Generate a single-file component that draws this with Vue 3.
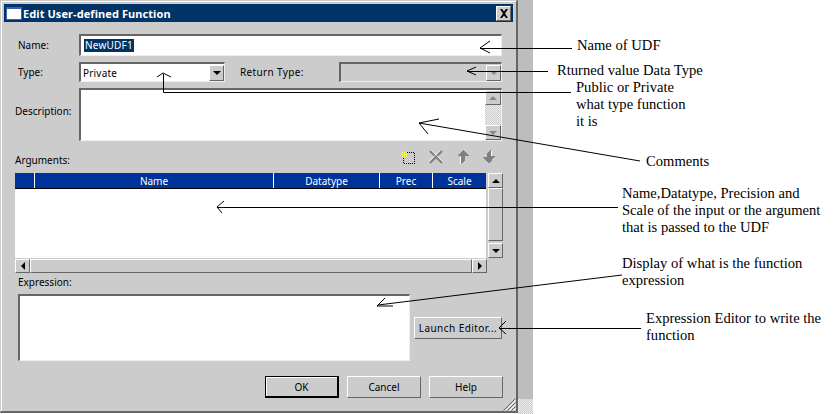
<script setup>
const notes = [
  { text: 'Name of UDF', x: 577, y: 37 },
  { text: 'Rturned value Data Type', x: 557, y: 62 },
  { text: 'Public or Private', x: 576, y: 79 },
  { text: 'what type function', x: 576, y: 96 },
  { text: 'it is', x: 576, y: 113 },
  { text: 'Comments', x: 646, y: 153 },
  { text: 'Name,Datatype, Precision and', x: 622, y: 185 },
  { text: 'Scale of the input or the argument', x: 622, y: 202 },
  { text: 'that is passed to the UDF', x: 622, y: 219 },
  { text: 'Display of what is the function', x: 622, y: 255 },
  { text: 'expression', x: 622, y: 272 },
  { text: 'Expression Editor to write the', x: 646, y: 310 },
  { text: 'function', x: 646, y: 327 }
]
const columns = [
  { label: '', width: 20 },
  { label: 'Name', width: 239 },
  { label: 'Datatype', width: 106 },
  { label: 'Prec', width: 53 },
  { label: 'Scale', width: 53 }
]
const noteStyle = (n) => ({ left: n.x + 'px', top: n.y + 'px' })
const colStyle = (c) => ({ width: c.width + 'px' })
</script>

<template>
  <div class="screen">
    <div class="dialog">
      <header class="titlebar">
        <span class="app-icon"></span>
        <span class="title">Edit User-defined Function</span>
        <button class="bevel close">
          <svg width="10" height="9" viewBox="0 0 10 9"><path d="M1 0h2l2 2.500 2-2.500h2L6 4.500 9 9H7L5 6.500 3 9H1l3-4.500z" fill="#000"/></svg>
        </button>
      </header>

      <div class="form">
        <div class="row row-name">
          <label class="label">Name:</label>
          <div class="sunken grow"><span class="selected">NewUDF1</span></div>
        </div>

        <div class="row row-type">
          <label class="label label-type">Type:</label>
          <div class="sunken combo">
            <span class="combo-text">Private</span>
            <span class="bevel arrow-btn"><i class="tri down"></i></span>
          </div>
          <label class="label-return">Return Type:</label>
          <div class="sunken combo disabled grow">
            <span class="combo-text"></span>
            <span class="bevel arrow-btn"><i class="tri down pale"></i></span>
          </div>
        </div>

        <div class="row row-desc">
          <label class="label label-desc">Description:</label>
          <div class="sunken grow desc">
            <div class="v-scroll slim">
              <span class="bevel sb-btn"><i class="tri up pale"></i></span>
              <span class="checker fill"></span>
              <span class="bevel sb-btn"><i class="tri down pale"></i></span>
            </div>
          </div>
        </div>

        <div class="args-head">
          <span class="args-label">Arguments:</span>
          <div class="tools">
            <svg width="16" height="16" viewBox="0 0 16 16" shape-rendering="crispEdges">
              <path d="M7 3.500h7.500v11h-11V9" fill="none" stroke="#000" stroke-dasharray="1 1"/>
              <path d="M4 2h1v3h3v1H5v3H4V6H1V5h3z" fill="#ff0"/>
              <path d="M2 3h1v1H2zM6 3h1v1H6zM2 7h1v1H2zM6 7h1v1H6z" fill="#fff"/>
            </svg>
            <svg width="16" height="16" viewBox="0 0 16 16">
              <path d="M2 2l12 12M14 2L2 14" stroke="#808080" stroke-width="2" fill="none"/>
              <path d="M3 1l12 12M12 1L1 12" stroke="#fff" stroke-width=".6" fill="none"/>
            </svg>
            <svg width="14" height="16" viewBox="0 0 14 16" shape-rendering="crispEdges">
              <path d="M7 1l6 6H9v4l-3 4H5v-8H1z" fill="#808080"/>
              <path d="M4 8h1v7H4z" fill="#fff"/>
            </svg>
            <svg width="14" height="16" viewBox="0 0 14 16" shape-rendering="crispEdges">
              <path d="M9 1v6h4l-6 8-6-7h4V5l3-4z" fill="#808080"/>
              <path d="M9 2h1v5H9z" fill="#fff"/>
            </svg>
          </div>
        </div>

        <div class="grid-wrap">
          <div class="grid-main">
            <div class="grid">
              <div class="grid-head">
                <span v-for="c in columns" :key="c.label" class="col" :style="colStyle(c)">{{ c.label }}</span>
              </div>
              <div class="grid-body"></div>
            </div>
            <div class="v-scroll wide">
              <span class="bevel sb-btn"><i class="tri up"></i></span>
              <span class="bevel thumb"></span>
              <span class="bevel sb-btn"><i class="tri down"></i></span>
            </div>
          </div>
          <div class="h-scroll">
            <span class="bevel sb-h"><i class="tri left"></i></span>
            <span class="bevel track"></span>
            <span class="bevel sb-h"><i class="tri right"></i></span>
          </div>
        </div>

        <div class="expr-label">Expression:</div>
        <div class="expr-row">
          <div class="sunken expr"></div>
          <button class="bevel btn launch">Launch Editor...</button>
        </div>

        <div class="actions">
          <button class="bevel btn default">OK</button>
          <button class="bevel btn">Cancel</button>
          <button class="bevel btn">Help</button>
        </div>
      </div>

      <svg class="grip" width="13" height="13" viewBox="0 0 13 13">
        <path d="M12.500 0.500L0.500 12.500M12.500 4.500L4.500 12.500M12.500 8.500L8.500 12.500" stroke="#666" fill="none"/>
        <path d="M12.500 2.500L2.500 12.500M12.500 6.500L6.500 12.500M12.500 10.500L10.500 12.500" stroke="#fff" fill="none"/>
      </svg>
    </div>

    <div class="band"><span class="checker corner"></span></div>

    <svg class="overlay" width="835" height="414" viewBox="0 0 835 414" fill="none" stroke="#000">
      <path d="M480 48.500H572M480 48L490 41M480 48L490 53"/>
      <path d="M467 71.500H548M467 71L476 67M467 71L476 75"/>
      <path d="M163.500 74V92.500H571M163 73L157 77M163 73L171 77"/>
      <path d="M419 123L640 161M419 123L439 119M419 123L428 134"/>
      <path d="M217 207.500H618M217 207L224 201M217 207L222 213"/>
      <path d="M378 305L622 275M377 306L385 298M377 306L393 306"/>
      <path d="M499 328.500H641M499 328L506 321M499 328L506 334"/>
    </svg>

    <span v-for="n in notes" :key="n.text" class="note" :style="noteStyle(n)">{{ n.text }}</span>
  </div>
</template>

<style>
html, body { margin: 0; background: #fff; }
</style>

<style scoped>
.screen {
  position: relative;
  display: flex;
  width: 835px;
  height: 414px;
  overflow: hidden;
  background: #fff;
  font-family: "Noto Sans", sans-serif;
  font-size: 10px;
  color: #000;
}
.dialog {
  position: relative;
  flex: none;
  box-sizing: border-box;
  width: 518px;
  height: 413px;
  padding: 3px 3px 0 3px;
  background: #ccc;
  border: 1px solid #ccc;
  border-right: 2px solid #666;
  border-bottom: 2px solid #666;
  box-shadow: inset 1px 1px 0 #fff;
}
.band {
  position: relative;
  flex: none;
  width: 15px;
  background: #bdbdbd;
}
.checker {
  background-color: #ccc;
  background-image: conic-gradient(#eee 25%, transparent 0 50%, #eee 0 75%, transparent 0);
  background-size: 2px 2px;
}
.corner {
  position: absolute;
  left: 0;
  bottom: 0;
  width: 15px;
  height: 15px;
}
.titlebar {
  display: flex;
  align-items: center;
  height: 18px;
  background: #036;
  color: #fff;
}
.app-icon {
  width: 14px;
  height: 10px;
  margin-left: 2px;
  background: #fff;
  border: 1px solid #3b5fb8;
  border-top-width: 2px;
}
.title {
  margin-left: 1px;
  font-weight: 700;
  font-size: 11px;
  letter-spacing: .08px;
  white-space: nowrap;
}
.bevel {
  box-sizing: border-box;
  background: #ccc;
  border: 1px solid;
  border-color: #fff #666 #666 #fff;
}
.close {
  display: flex;
  align-items: center;
  justify-content: center;
  width: 15px;
  height: 15px;
  margin-left: auto;
  margin-right: 2px;
  padding: 0;
}
.form {
  display: flex;
  flex-direction: column;
  padding: 0 11px 0 11px;
}
.row {
  display: flex;
}
.row-name { margin-top: 12px; height: 22px; align-items: center; }
.row-type { margin-top: 6px; height: 20px; align-items: center; }
.row-desc { margin-top: 6px; height: 53px; }
.label {
  flex: none;
  width: 64px;
  padding-left: 3px;
  box-sizing: border-box;
}
.label-desc {
  padding-left: 0;
  padding-top: 16px;
}
.grow { flex: 1; min-width: 0; }
.sunken {
  box-sizing: border-box;
  align-self: stretch;
  display: flex;
  align-items: center;
  background: #fff;
  border: 1px solid;
  border-width: 2px 1px 1px 2px;
  border-color: #666 #eee #eee #666;
}
.selected {
  margin-left: 3px;
  padding: 0 1px;
  background: #036;
  color: #fff;
  line-height: 13px;
  letter-spacing: .2px;
}
.combo { width: 146px; flex: none; justify-content: space-between; }
.combo.grow { width: auto; flex: 1; }
.combo-text { padding-left: 2px; letter-spacing: .2px; }
.disabled { background: #ccc; }
.arrow-btn {
  display: flex;
  align-items: center;
  justify-content: center;
  width: 15px;
  height: 16px;
}
.label-return {
  flex: none;
  width: 114px;
  box-sizing: border-box;
  padding-left: 15px;
  letter-spacing: .35px;
}
.tri {
  display: block;
  width: 0;
  height: 0;
  border-style: solid;
  border-color: transparent;
}
.tri.down { border-width: 4px 4px 0; border-top-color: #000; }
.tri.up { border-width: 0 4px 4px; border-bottom-color: #000; }
.tri.left { border-width: 4px 4px 4px 0; border-right-color: #000; }
.tri.right { border-width: 4px 0 4px 4px; border-left-color: #000; }
.tri.down.pale { border-top-color: #888; }
.tri.up.pale { border-bottom-color: #888; }
.desc {
  justify-content: flex-end;
  align-items: stretch;
}
.v-scroll {
  display: flex;
  flex-direction: column;
}
.slim { width: 16px; }
.sb-btn {
  display: flex;
  align-items: center;
  justify-content: center;
  flex: none;
  height: 15px;
}
.fill { flex: 1; }
.args-head {
  display: flex;
  align-items: center;
  justify-content: space-between;
  height: 32px;
}
.args-label { margin-top: 6px; }
.tools {
  display: flex;
  gap: 12px;
  align-items: center;
  padding-right: 6px;
}
.grid-wrap {
  display: flex;
  flex-direction: column;
  width: 488px;
}
.grid-main {
  display: flex;
  gap: 2px;
  height: 85px;
}
.grid {
  display: flex;
  flex-direction: column;
  width: 471px;
  background: #fff;
}
.grid-head {
  display: flex;
  flex: none;
  height: 16px;
  box-sizing: border-box;
  background: #039;
  color: #fff;
  border-bottom: 1px solid #000;
}
.col {
  box-sizing: border-box;
  flex: none;
  text-align: center;
  line-height: 17px;
  border-right: 1px solid #fff;
}
.col:last-child { border-right: 0; }
.wide { width: 15px; }
.thumb { flex: 1; margin: 0 0 2px; }
.h-scroll {
  display: flex;
  margin-top: 1px;
  width: 472px;
  height: 14px;
}
.sb-h {
  display: flex;
  align-items: center;
  justify-content: center;
  flex: none;
  width: 15px;
}
.track { flex: 1; }
.expr-label {
  margin-top: 2px;
  height: 19px;
  padding-left: 3px;
  line-height: 15px;
}
.expr-row {
  display: flex;
  gap: 4px;
  height: 67px;
  padding-left: 3px;
}
.expr { width: 392px; flex: none; }
.btn {
  font: inherit;
  color: #000;
  padding: 0;
  height: 22px;
  width: 74px;
}
.launch {
  width: 89px;
  margin-top: 23px;
  white-space: nowrap;
  letter-spacing: .45px;
}
.actions {
  display: flex;
  justify-content: flex-end;
  gap: 8px;
  margin-top: 15px;
  padding-right: 0;
  width: 488px;
  box-sizing: border-box;
}
.default {
  border-width: 1px 2px 2px 1px;
  border-color: #000;
  box-shadow: inset 1px 1px 0 #fff;
}
.grip {
  position: absolute;
  right: 0;
  bottom: 0;
}
.overlay {
  position: absolute;
  left: 0;
  top: 0;
  pointer-events: none;
}
.note {
  position: absolute;
  font-family: "Liberation Serif", serif;
  font-size: 14.6px;
  line-height: 17px;
  white-space: nowrap;
}
</style>
